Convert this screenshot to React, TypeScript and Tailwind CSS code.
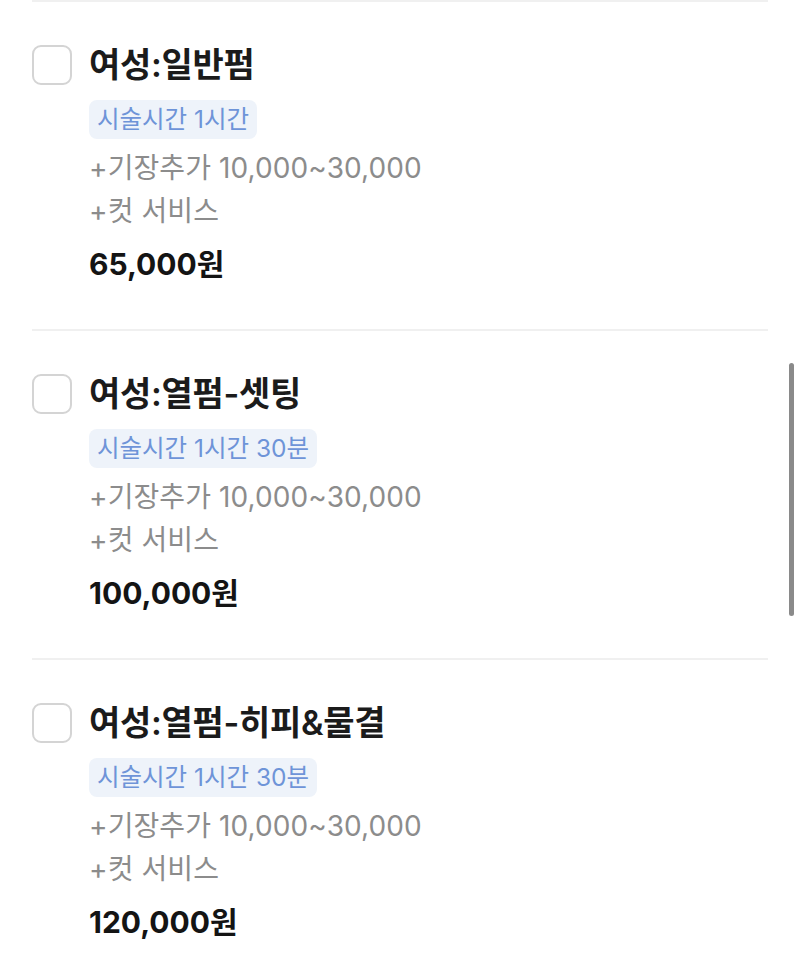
import React from 'react';

type Item = {
  name: string;
  duration: string;
  extras: string[];
  price: string;
};

const items: Item[] = [
  {
    name: '여성:일반펌',
    duration: '시술시간 1시간',
    extras: ['+기장추가 10,000~30,000', '+컷 서비스'],
    price: '65,000원',
  },
  {
    name: '여성:열펌-셋팅',
    duration: '시술시간 1시간 30분',
    extras: ['+기장추가 10,000~30,000', '+컷 서비스'],
    price: '100,000원',
  },
  {
    name: '여성:열펌-히피&물결',
    duration: '시술시간 1시간 30분',
    extras: ['+기장추가 10,000~30,000', '+컷 서비스'],
    price: '120,000원',
  },
];

function MenuRow({ item }: { item: Item }) {
  return (
    <div className="flex border-t-2 border-[#f0f0f0] pt-[43px] pb-[45px]">
      <div className="h-10 w-10 shrink-0 rounded-[9px] border-2 border-[#d4d4d4] bg-white" />
      <div className="ml-[17px] flex flex-col items-start">
        <div className="h-10 text-[34px] leading-10 font-semibold tracking-[-0.3px] text-[#1b1b1b]">
          {item.name}
        </div>
        <div className="mt-[15px] rounded-[8px] bg-[#eef3fa] px-[8px] text-[24.5px] leading-[39px] text-[#6e94d8]">
          {item.duration}
        </div>
        <div className="mt-[8px] text-[28px] leading-[43px] text-[#8c8c8c] tracking-[0.1px]">
          {item.extras.map((e) => (
            <div key={e}>{e}</div>
          ))}
        </div>
        <div className="mt-[11px] text-[30px] leading-10 font-bold text-[#141414]">
          {item.price}
        </div>
      </div>
    </div>
  );
}

export default function App() {
  return (
    <div
      className="relative h-[980px] w-[800px] overflow-hidden bg-white"
      style={{ fontFamily: 'Inter, "Noto Sans CJK KR", "Noto Sans", sans-serif' }}
    >
      <div className="px-8">
        {items.map((item) => (
          <MenuRow key={item.name} item={item} />
        ))}
      </div>
      {/* scroll indicator */}
      <div className="absolute right-[6px] top-[363px] h-[253px] w-[5px] rounded-full bg-[#8a8a8a]" />
    </div>
  );
}
